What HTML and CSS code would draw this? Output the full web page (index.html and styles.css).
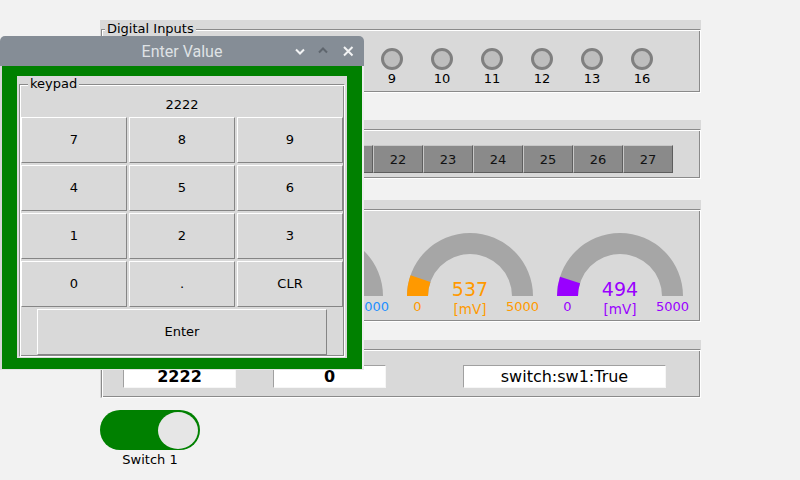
FILE: index.html
```html
<!DOCTYPE html>
<html>
<head>
<meta charset="utf-8">
<title>Panel</title>
<link rel="stylesheet" href="styles.css">
</head>
<body>
<div class="main">
  <section class="sec sec-di">
    <div class="group g-di">
      <span class="legend">Digital Inputs</span>
      <div class="leds">
        <div class="led"><span class="dot"></span><span class="lbl">4</span></div>
        <div class="led"><span class="dot"></span><span class="lbl">5</span></div>
        <div class="led"><span class="dot"></span><span class="lbl">6</span></div>
        <div class="led"><span class="dot"></span><span class="lbl">7</span></div>
        <div class="led"><span class="dot"></span><span class="lbl">8</span></div>
        <div class="led"><span class="dot"></span><span class="lbl">9</span></div>
        <div class="led"><span class="dot"></span><span class="lbl">10</span></div>
        <div class="led"><span class="dot"></span><span class="lbl">11</span></div>
        <div class="led"><span class="dot"></span><span class="lbl">12</span></div>
        <div class="led"><span class="dot"></span><span class="lbl">13</span></div>
        <div class="led"><span class="dot"></span><span class="lbl">16</span></div>
      </div>
    </div>
  </section>

  <section class="sec sec-do">
    <div class="group g-do">
      <span class="legend">Digital Outputs</span>
      <div class="outs">
        <div class="out">17</div>
        <div class="out">18</div>
        <div class="out">19</div>
        <div class="out">20</div>
        <div class="out">21</div>
        <div class="out">22</div>
        <div class="out">23</div>
        <div class="out">24</div>
        <div class="out">25</div>
        <div class="out">26</div>
        <div class="out">27</div>
      </div>
    </div>
  </section>

  <section class="sec sec-ai">
    <div class="group g-ai">
      <span class="legend">Analog Inputs</span>
      <div class="gauges">
        <svg class="gauge" viewBox="0 0 130 90" width="130" height="90">
          <path class="arc" d="M2 66 A63 63 0 0 1 128 66 L107 66 A42 42 0 0 0 23 66 Z"/>
          <path fill="#00a000" d="M2 66 A63 63 0 0 1 19.07 22.88 L34.38 37.25 A42 42 0 0 0 23 66 Z"/>
          <text class="gv" x="65" y="66" fill="#00a000">1200</text>
          <text class="gu" x="65" y="84" fill="#00a000">[mV]</text>
          <text class="gl" x="12.5" y="81" fill="#00a000">0</text>
          <text class="gl" x="117.5" y="81" fill="#00a000">5000</text>
        </svg>
        <svg class="gauge" viewBox="0 0 130 90" width="130" height="90">
          <path class="arc" d="M2 66 A63 63 0 0 1 128 66 L107 66 A42 42 0 0 0 23 66 Z"/>
          <path fill="#1e90ff" d="M2 66 A63 63 0 0 1 9.79 35.65 L28.2 45.76 A42 42 0 0 0 23 66 Z"/>
          <text class="gv" x="65" y="66" fill="#1e90ff">800</text>
          <text class="gu" x="65" y="84" fill="#1e90ff">[mV]</text>
          <text class="gl" x="12.5" y="81" fill="#1e90ff">0</text>
          <text class="gl" x="117.5" y="81" fill="#1e90ff">5000</text>
        </svg>
        <svg class="gauge" viewBox="0 0 130 90" width="130" height="90">
          <path class="arc" d="M2 66 A63 63 0 0 1 128 66 L107 66 A42 42 0 0 0 23 66 Z"/>
          <path fill="#ff9900" d="M2 66 A63 63 0 0 1 5.55 45.15 L25.37 52.10 A42 42 0 0 0 23 66 Z"/>
          <text class="gv" x="65" y="66" fill="#ff9900">537</text>
          <text class="gu" x="65" y="84" fill="#ff9900">[mV]</text>
          <text class="gl" x="12.5" y="81" fill="#ff9900">0</text>
          <text class="gl" x="117.5" y="81" fill="#ff9900">5000</text>
        </svg>
        <svg class="gauge" viewBox="0 0 130 90" width="130" height="90">
          <path class="arc" d="M2 66 A63 63 0 0 1 128 66 L107 66 A42 42 0 0 0 23 66 Z"/>
          <path fill="#9900ff" d="M2 66 A63 63 0 0 1 5.01 46.77 L25.01 53.18 A42 42 0 0 0 23 66 Z"/>
          <text class="gv" x="65" y="66" fill="#9900ff">494</text>
          <text class="gu" x="65" y="84" fill="#9900ff">[mV]</text>
          <text class="gl" x="12.5" y="81" fill="#9900ff">0</text>
          <text class="gl" x="117.5" y="81" fill="#9900ff">5000</text>
        </svg>
      </div>
    </div>
  </section>

  <section class="sec sec-val">
    <div class="group g-val">
      <span class="legend">Values</span>
      <div class="entries">
        <div class="entry e1 bold">2222</div>
        <div class="entry e2 bold">0</div>
        <div class="entry e3">switch:sw1:True</div>
      </div>
    </div>
  </section>

  <div class="switch-wrap">
    <div class="switch"><span class="knob"></span></div>
    <div class="sw-label">Switch 1</div>
  </div>
</div>

<div class="dialog">
  <div class="titlebar">
    <span class="title">Enter Value</span>
    <div class="tb-icons">
      <svg class="tb-ic" viewBox="0 0 16 16" width="16" height="16"><polyline points="4,6.5 8,10.5 12,6.5" fill="none" stroke="#f2f3f4" stroke-width="2"/></svg>
      <svg class="tb-ic ic-up" viewBox="0 0 16 16" width="16" height="16"><polyline points="4,9.5 8,5.5 12,9.5" fill="none" stroke="#5f666e" stroke-width="2"/></svg>
      <svg class="tb-ic ic-close" viewBox="0 0 16 16" width="16" height="16"><path d="M4 4 L12.5 12.5 M12.5 4 L4 12.5" fill="none" stroke="#f2f3f4" stroke-width="2"/></svg>
    </div>
  </div>
  <div class="dbody">
    <div class="kframe">
      <div class="group kgroup">
        <span class="legend klegend">keypad</span>
        <div class="kval">2222</div>
        <div class="keys">
          <button class="key">7</button>
          <button class="key">8</button>
          <button class="key">9</button>
          <button class="key">4</button>
          <button class="key">5</button>
          <button class="key">6</button>
          <button class="key">1</button>
          <button class="key">2</button>
          <button class="key">3</button>
          <button class="key">0</button>
          <button class="key">.</button>
          <button class="key">CLR</button>
        </div>
        <button class="key enter">Enter</button>
      </div>
    </div>
  </div>
</div>
</body>
</html>
```

FILE: styles.css
```css
* { box-sizing: border-box; }

html, body { margin: 0; padding: 0; }

body {
  width: 800px;
  height: 480px;
  background: #f2f2f2;
  font-family: "DejaVu Sans", sans-serif;
  font-size: 13px;
  color: #000;
  position: relative;
  overflow: hidden;
}

.main {
  padding: 20px 0 0 100px;
  width: 720px;
}

.sec {
  background: #d9d9d9;
  width: 601px;
  padding-top: 9px;
}
.sec-do { margin-top: 27px; }
.sec-ai { margin-top: 21px; }
.sec-val { margin-top: 18px; }

.group {
  position: relative;
  margin-left: 1px;
  border: 1px solid;
  border-color: #8a8a8a #ffffff #ffffff #8a8a8a;
  box-shadow: inset 1px 1px 0 #ffffff, inset -1px -1px 0 #8a8a8a;
}
.g-di { height: 64px; }
.g-do { height: 50px; }
.g-ai { height: 113px; }
.g-val { height: 49px; }

.legend {
  position: absolute;
  top: -9px;
  left: 3px;
  padding: 0 2px;
  background: #d9d9d9;
  font-size: 13px;
  line-height: 16px;
  white-space: nowrap;
}

/* digital inputs */
.leds { display: flex; padding: 18px 0 0 15px; }
.led {
  width: 50px;
  display: flex;
  flex-direction: column;
  align-items: center;
}
.dot {
  width: 22px;
  height: 22px;
  border-radius: 50%;
  background: #bebebe;
  border: 3px solid #808080;
}
.lbl { line-height: 18px; }

/* digital outputs */
.outs { display: flex; padding: 15px 0 0 21px; }
.out {
  width: 50px;
  height: 28px;
  background: #8a8a8a;
  border: 1px solid;
  border-color: #c8c8c8 #5e5e5e #5e5e5e #c8c8c8;
  display: flex;
  align-items: center;
  justify-content: center;
  color: #111;
}

/* gauges */
.gauges { display: flex; gap: 20px; padding: 20px 0 0 2.5px; }
.gauge { display: block; width: 130px; height: 90px; overflow: visible; }
.arc { fill: #a6a6a6; }
.gauge text { font-family: "DejaVu Sans", sans-serif; text-anchor: middle; }
.gv { font-size: 19px; }
.gu { font-size: 13.5px; }
.gl { font-size: 13px; }

/* entries */
.entries { display: flex; padding: 15px 0 0 21px; }
.entry {
  height: 23px;
  background: #ffffff;
  border: 1px solid;
  border-color: #a0a0a0 #f6f6f6 #f6f6f6 #a0a0a0;
  font-size: 16px;
  line-height: 21px;
  text-align: center;
  white-space: nowrap;
}
.e1 { width: 113px; }
.e2 { width: 113px; margin-left: 37px; }
.e3 { width: 203px; margin-left: 77px; }
.bold { font-weight: bold; }

/* switch */
.switch-wrap {
  width: 100px;
  margin-top: 12px;
  display: flex;
  flex-direction: column;
  align-items: center;
}
.switch {
  width: 100px;
  height: 40px;
  border-radius: 20px;
  background: #008000;
  display: flex;
  justify-content: flex-end;
  align-items: center;
  padding-right: 2px;
}
.knob {
  width: 40px;
  height: 37px;
  border-radius: 50%;
  background: #e6e6e6;
}
.sw-label { line-height: 16px; margin-top: 2px; }

/* dialog */
.dialog {
  position: absolute;
  left: 0;
  top: 36px;
  width: 364px;
}
.titlebar {
  height: 30px;
  background: #858d96;
  border-radius: 5px 5px 0 0;
  display: grid;
  grid-template-columns: 1fr auto 1fr;
  align-items: center;
}
.title {
  grid-column: 2;
  font-family: Roboto, "Noto Sans", sans-serif;
  font-size: 16px;
  color: #dfe2e5;
  white-space: nowrap;
}
.tb-icons {
  grid-column: 3;
  justify-self: end;
  display: flex;
  padding-right: 8px;
}
.tb-ic { display: block; }
.ic-up { margin-left: 7px; }
.ic-close { margin-left: 9px; }

.dbody {
  background: #008000;
  border-style: solid;
  border-width: 0 2px 1px 2px;
  border-color: #d6d6d6 #eeeeee #e2e2e2 #d6d6d6;
  padding: 10px 15px 11px;
}
.kframe {
  background: #d9d9d9;
  padding: 8px 2px 1px;
}
.kgroup {
  margin-left: 0;
  padding: 1px;
}
.klegend { left: 8px; }
.kval {
  text-align: center;
  line-height: 18px;
  padding-top: 10px;
  margin-bottom: 3px;
}
.keys {
  display: grid;
  grid-template-columns: repeat(3, 106px);
  grid-auto-rows: 46px;
  gap: 2px;
}
.key {
  margin: 0;
  padding: 0 0 2px 0;
  font-family: "DejaVu Sans", sans-serif;
  font-size: 13px;
  color: #000;
  background: #d9d9d9;
  border: 1px solid;
  border-color: #ffffff #858585 #858585 #ffffff;
  border-radius: 0;
}
.enter {
  display: block;
  width: 290px;
  height: 46px;
  margin: 2px 0 0 16px;
}
```
